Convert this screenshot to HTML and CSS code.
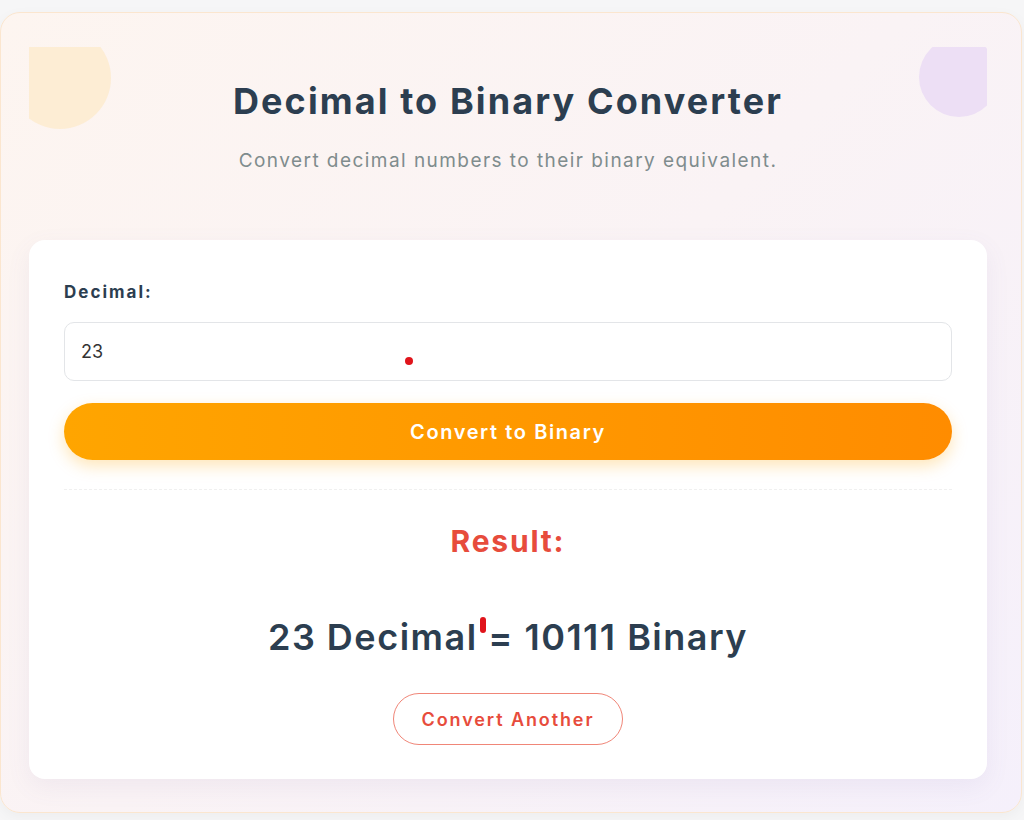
FILE: index.html
```html
<!DOCTYPE html>
<html lang="en">
<head>
    <meta charset="UTF-8">
    <meta name="viewport" content="width=device-width, initial-scale=1.0">
    <title>Decimal to Binary Converter</title>
    <link rel="stylesheet" href="styles.css">
</head>
<body>
    <div class="wrap">
        <!-- 头部 -->
        <header class="head">
            <span class="blob blob-left"></span>
            <span class="blob blob-right"></span>
            <h1>Decimal to Binary Converter</h1>
            <p>Convert decimal numbers to their binary equivalent.</p>
        </header>

        <!-- 表单卡片 -->
        <section class="card">
            <form action="">
                <label for="dec">Decimal:</label>
                <div class="field">
                    <input type="text" id="dec" value="23">
                    <span class="dot"></span>
                </div>
                <button type="button" class="btn-go">Convert to Binary</button>
            </form>

            <div class="result">
                <h2>Result:</h2>
                <p class="answer">23 Decimal<span class="mark"></span> = 10111 Binary</p>
                <button type="button" class="btn-again">Convert Another</button>
            </div>
        </section>
    </div>
</body>
</html>
```

FILE: styles.css
```css
*{
    box-sizing: border-box;
}
body{
    margin: 0;
    padding-top: 12px;
    background-color: #f6f6f7;
    font-family: "Inter", "Open Sans", sans-serif;
    color: #2c3e50;
}

/* 外层大盒子 */
.wrap{
    margin: 0 2px 8px 0;
    padding: 34px 34px 33px 28px;
    border: 1px solid #fbe6cf;
    border-radius: 20px;
    background: linear-gradient(135deg, #fdf5f0 0%, #faf3f5 50%, #f5f0fb 100%);
    box-shadow: 0 4px 14px rgba(0, 0, 0, 0.04);
}

/* 头部 + 装饰圆 */
.head{
    position: relative;
    overflow: hidden;
    padding-top: 33px;
    text-align: center;
}
.blob{
    position: absolute;
    border-radius: 50%;
}
.blob-left{
    top: -20px;
    left: -20px;
    width: 102px;
    height: 102px;
    background-color: #fdebcf;
    opacity: 0.85;
}
.blob-right{
    top: -10px;
    right: -12px;
    width: 80px;
    height: 80px;
    background-color: #eddff5;
}
.head h1{
    position: relative;
    margin: 0;
    font-size: 36px;
    line-height: 43px;
    font-weight: 700;
    letter-spacing: 2.1px;
    color: #2c3e50;
}
.head p{
    position: relative;
    margin: 24px 0 0;
    font-size: 19px;
    line-height: 27px;
    letter-spacing: 1.45px;
    color: #7f8c8d;
}

/* 白色卡片 */
.card{
    margin-top: 66px;
    padding: 40px 35px 34px;
    background-color: #fff;
    border-radius: 16px;
    box-shadow: 0 8px 24px rgba(120, 100, 160, 0.08);
}
.card label{
    display: block;
    margin-bottom: 18px;
    font-size: 17px;
    line-height: 24px;
    font-weight: 700;
    letter-spacing: 2px;
}
.field{
    position: relative;
}
.field input{
    display: block;
    width: 100%;
    padding: 16px;
    font-family: "Inter", sans-serif;
    font-size: 18px;
    line-height: 25px;
    color: #333;
    border: 1px solid #e3e5e8;
    border-radius: 10px;
    outline: none;
}
/* 红点标记 */
.dot{
    position: absolute;
    left: 341px;
    top: 35px;
    width: 8px;
    height: 8px;
    border-radius: 50%;
    background-color: #e0141b;
}
.btn-go{
    display: block;
    width: 100%;
    height: 57px;
    margin-top: 22px;
    font-family: inherit;
    font-size: 20px;
    font-weight: 600;
    letter-spacing: 1.6px;
    color: #fff;
    border: 0;
    border-radius: 30px;
    background: linear-gradient(90deg, #ffa500, #ff8c00);
    box-shadow: 0 6px 16px rgba(255, 165, 0, 0.28);
}

/* 结果区域 */
.result{
    margin-top: 29px;
    padding-top: 33px;
    border-top: 1px dashed #f0f0f0;
    text-align: center;
}
.result h2{
    margin: 0;
    font-size: 30px;
    line-height: 36px;
    font-weight: 700;
    letter-spacing: 1.8px;
    color: #e74c3c;
}
.answer{
    margin: 57px 0 0;
    font-size: 36px;
    line-height: 43px;
    font-weight: 600;
    letter-spacing: 1.5px;
}
.mark{
    position: relative;
    display: inline-block;
    width: 0;
    height: 0;
}
.mark::before{
    content: '';
    position: absolute;
    left: 2px;
    top: -33px;
    width: 6px;
    height: 16px;
    border-radius: 3px;
    background-color: #e0141b;
}
.btn-again{
    margin-top: 34px;
    width: 230px;
    height: 52px;
    font-family: inherit;
    font-size: 18px;
    font-weight: 600;
    letter-spacing: 1.9px;
    color: #e74c3c;
    background-color: #fff;
    border: 1px solid #f08678;
    border-radius: 26px;
}
```
